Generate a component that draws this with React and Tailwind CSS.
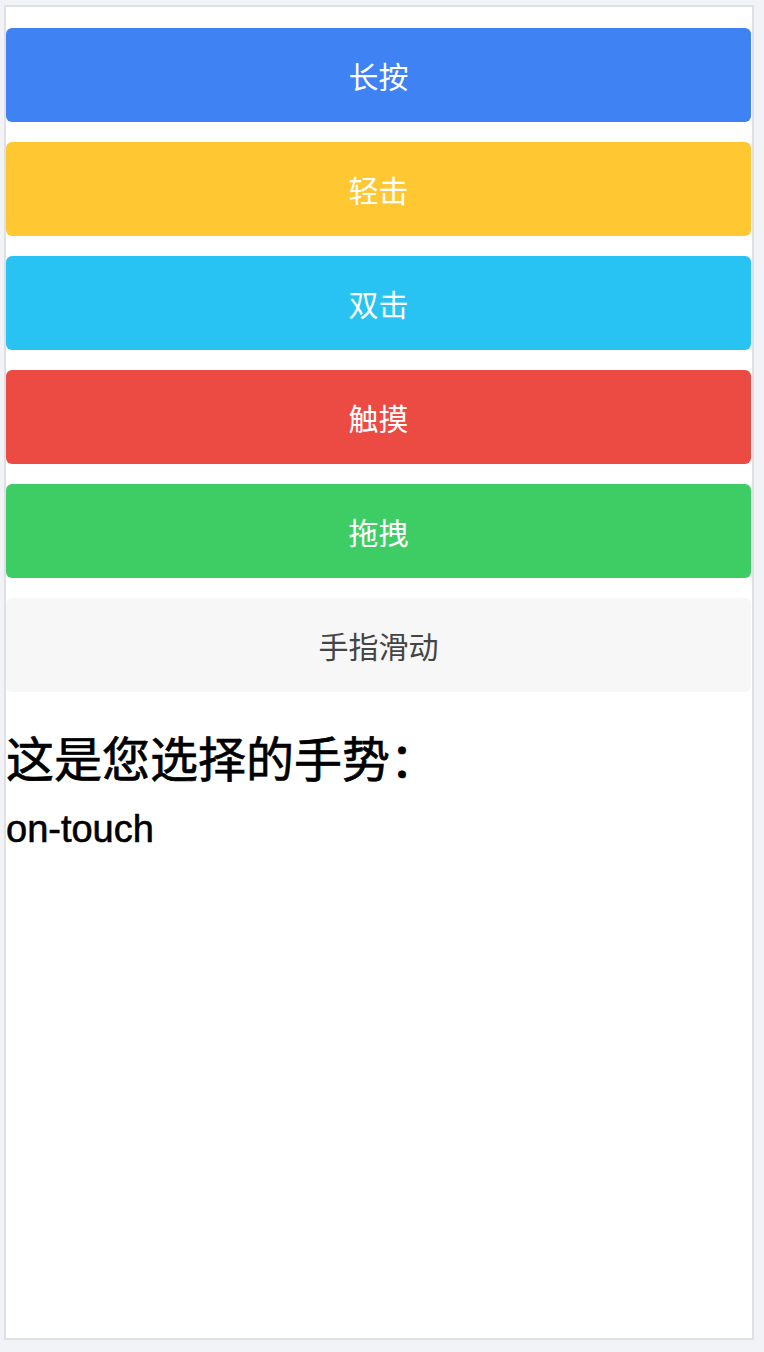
const buttons = [
  { label: "长按", cls: "bg-[#3e82f3] text-white" },
  { label: "轻击", cls: "bg-[#ffc832] text-white" },
  { label: "双击", cls: "bg-[#28c3f2] text-white" },
  { label: "触摸", cls: "bg-[#ec4b44] text-white" },
  { label: "拖拽", cls: "bg-[#3ecd65] text-white" },
  { label: "手指滑动", cls: "bg-[#f7f7f7] text-[#444444]" },
];

export default function App() {
  return (
    <div className="min-h-[1352px] w-[764px] bg-[#f2f3f7] pl-[4px] pt-[5px] font-['Noto_Sans_CJK_SC',sans-serif]">
      <div className="w-[750px] h-[1335px] border-2 border-[#dfe0e6] bg-white pt-[21px]">
        {/* gesture buttons */}
        <div className="flex flex-col gap-[20px]">
          {buttons.map((b, key) => (
            <div
              key={key}
              className={`w-[745px] h-[94px] rounded-[6px] flex items-center justify-center text-[30px] ${b.cls}`}
            >
              {b.label}
            </div>
          ))}
        </div>
        {/* result */}
        <h2 className="mt-[36px] text-[48px] leading-[56px] font-normal text-black [-webkit-text-stroke:0.7px_black]">
          这是您选择的手势：
        </h2>
        <p className="mt-[23px] font-['Liberation_Sans',sans-serif] text-[38px] leading-[44px] text-black [-webkit-text-stroke:0.6px_black]">
          on-touch
        </p>
      </div>
    </div>
  );
}
